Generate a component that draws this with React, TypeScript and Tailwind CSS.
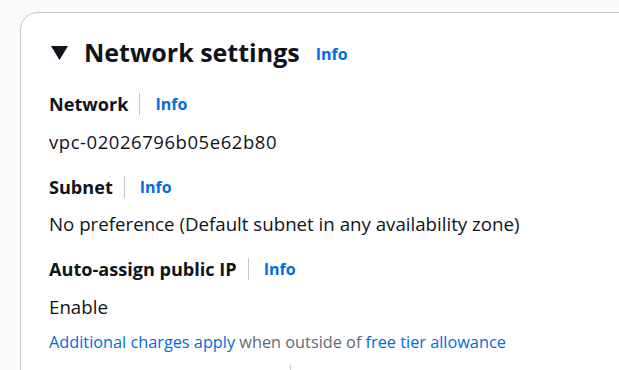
const Label = ({ text }: { text: string }) => (
  <div className="flex items-center h-[26px]">
    <span className="text-[18.1px] font-bold text-[#0f141a] leading-[24px]">{text}</span>
    <span className="ml-[11px] mr-[15px] h-[22px] w-px bg-[#c6c6cd]"></span>
    <a className="text-[16px] font-bold text-[#006ce0] leading-[22px]">Info</a>
  </div>
);

export default function App() {
  return (
    <div
      className="w-[619px] h-[370px] overflow-hidden bg-[#fafafa] pt-[12px] pl-[20px]"
      style={{ fontFamily: '"Open Sans", "Noto Sans", Arial, sans-serif' }}
    >
      <div className="h-[400px] w-[640px] bg-white border border-[#c6c6cd] rounded-tl-[18px] pl-[28px] pt-[20px]">
        {/* HEADER */}
        <div className="flex items-center h-[38px]">
          <svg width="17" height="14" viewBox="0 0 17 14" className="ml-[2px] mt-[1px]">
            <polygon points="0,0 17,0 8.5,14" fill="#0f141a" />
          </svg>
          <h2 className="ml-[16px] text-[25px] font-bold text-[#0f141a] leading-[38px]">
            Network settings
          </h2>
          <a className="ml-[16px] mt-[4px] text-[16px] font-bold text-[#006ce0]">Info</a>
        </div>

        {/* FIELDS */}
        <div className="mt-[20px] flex flex-col">
          <Label text="Network" />
          <div className="mt-[13px] text-[18.5px] text-[#0f141a] leading-[24px] tracking-[0.55px]">
            vpc-02026796b05e62b80
          </div>

          <div className="mt-[20px]">
            <Label text="Subnet" />
          </div>
          <div className="mt-[12px] text-[18.7px] text-[#0f141a] leading-[24px]">
            No preference (Default subnet in any availability zone)
          </div>

          <div className="mt-[20px]">
            <Label text="Auto-assign public IP" />
          </div>
          <div className="mt-[13px] text-[18.7px] text-[#0f141a] leading-[24px]">Enable</div>
          <div className="mt-[12px] text-[16.3px] leading-[22px] text-[#656871]">
            <a className="text-[#006ce0]">Additional charges apply</a> when outside of{" "}
            <a className="text-[#006ce0]">free tier allowance</a>
          </div>
          <div className="mt-[12px] ml-[241px] h-[10px] w-px bg-[#c6c6cd]"></div>
        </div>
      </div>
    </div>
  );
}
